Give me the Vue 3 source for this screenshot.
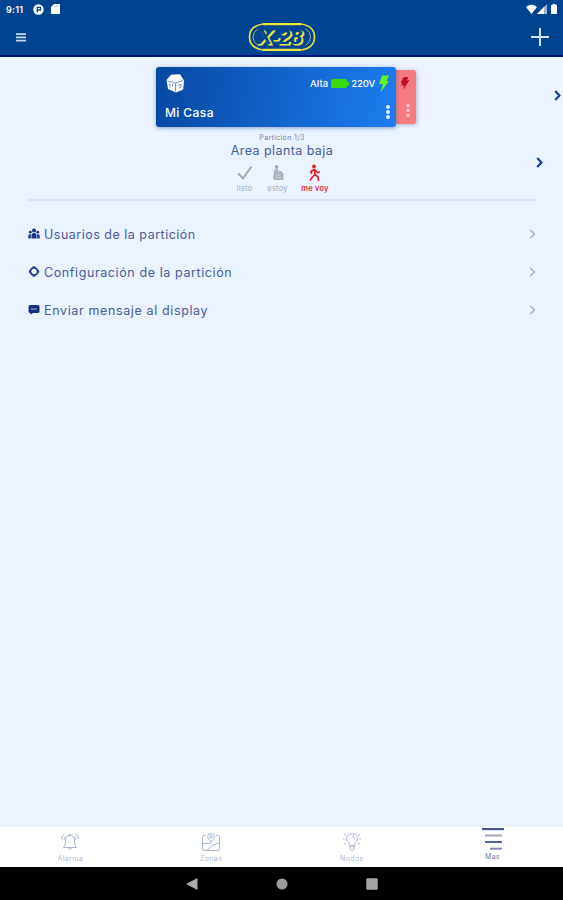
<template>
  <div class="screen">
    <header class="header">
      <div class="status-bar">
        <span class="clock">9:11</span>
        <svg class="st-app" width="11" height="11" viewBox="0 0 11 11">
          <circle cx="5.5" cy="5.5" r="5.2" fill="#fff" />
          <path d="M4.300 8.500V3.400h3.800M5 6h2.500V4" fill="none" stroke="#004390" stroke-width="1.300" />
        </svg>
        <svg class="st-sd" width="9" height="10" viewBox="0 0 9 10">
          <path d="M3 0h5.2q.8 0 .8.8v8.4q0 .8-.8.8H.8Q0 10 0 9.200V3z" fill="#fff" />
          <path d="M3.500 1.500v1.500M5.300 1.500v1.500M7 1.500v1.500" stroke="#7d9fc9" stroke-width=".7" />
        </svg>
        <svg class="st-right" width="34" height="11" viewBox="0 0 34 11">
          <path d="M0 3Q5.500-2 11 3L5.500 10z" fill="#fff" />
          <path d="M21 0v10H11z" fill="#9db6d8" />
          <path d="M18 3v7h-7z" fill="#fff" />
          <path d="M25 1h1.500V0h3v1H31v9h-6z" fill="#fff" />
        </svg>
      </div>
      <div class="toolbar">
        <svg width="10" height="9" viewBox="0 0 10 9"><path d="M0 1.200h10M0 4.400h10M0 7.600h10" stroke="#c9d7ea" stroke-width="1.800" /></svg>
        <svg class="logo" width="68" height="30" viewBox="0 0 68 30">
          <path d="M15 2.200H53M15 27.800H53" stroke="#ece63a" stroke-width="2.200" />
          <path d="M15 2Q1.500 4 1.500 15T15 28M53 2Q66.500 4 66.500 15T53 28" fill="none" stroke="#e0dc44" stroke-width="1.700" />
          <path d="M10 6.500Q5 10 5 15T10 23.500M57.500 6.500Q62.500 10 62.500 15T57.500 23.500" fill="none" stroke="#a9b266" stroke-width="1" />
          <text x="11.500" y="23" textLength="44" lengthAdjust="spacingAndGlyphs" class="logo-text lit">X-28</text>
          <text x="10" y="22.200" textLength="44" lengthAdjust="spacingAndGlyphs" class="logo-text">X-28</text>
        </svg>
        <svg width="18" height="18" viewBox="0 0 18 18"><path d="M9 0v18M0 9h18" stroke="#d5e0f0" stroke-width="2" /></svg>
      </div>
    </header>

    <main class="content">
      <section class="panels">
        <article class="card">
          <div class="card-row">
            <svg width="19" height="19" viewBox="0 0 19 19">
              <path d="M5 .8l9-.5 4 6.200-.8 9L10 18.500 2 15 .5 6z" fill="#fff" />
              <path d="M1.500 7l8 2 7.500-2.500M9.500 9v8.500M4 9.500v4M6.500 10v2.500M12 11.500l3-1v2.500l-2 .8" fill="none" stroke="#6a98cf" stroke-width="1" />
            </svg>
            <div class="power">
              <span class="alta">Alta</span>
              <svg width="18" height="9" viewBox="0 0 18 9"><path d="M1.500 0h13q1.500 0 1.500 2l2 1v3l-2 1q0 2-1.500 2h-13Q0 9 0 7.500v-6Q0 0 1.500 0z" fill="#39dc0a" /></svg>
              <span class="volt">220V</span>
              <svg class="bolt" width="12" height="18" viewBox="0 0 12 18"><path d="M4 .5h7L8.500 6H11L2.500 17.500 4.800 9H1z" fill="#61f42d" /></svg>
            </div>
          </div>
          <div class="card-row bottom">
            <span class="card-title">Mi Casa</span>
            <svg class="dots" width="4" height="14" viewBox="0 0 4 14" fill="#eff6ff"><circle cx="2" cy="2" r="1.900" /><circle cx="2" cy="7" r="1.900" /><circle cx="2" cy="12" r="1.900" /></svg>
          </div>
        </article>
        <article class="next-card">
          <svg width="10" height="15" viewBox="0 0 10 15"><path d="M3.500 1h5L6.800 4.500l2.700-.5-6.500 10L4 9.500H1L2.200 7H.7z" fill="#bd1020" /></svg>
          <svg width="4" height="13" viewBox="0 0 4 13" fill="#ffc7cb"><circle cx="2" cy="1.700" r="1.700" /><circle cx="2" cy="6.500" r="1.700" /><circle cx="2" cy="11.300" r="1.700" /></svg>
        </article>
        <svg class="next-panel" width="7" height="11" viewBox="0 0 7 11"><path d="M1.200 1l4.300 4.500L1.200 10" class="chev-bold" /></svg>
      </section>

      <section class="partition">
        <div class="part-num">Partición 1/3</div>
        <div class="part-name">Area planta baja</div>
        <div class="modes">
          <div class="mode">
            <svg width="16" height="18" viewBox="0 0 16 18"><path d="M1.200 9.500L6 14.500 14.500 2.500" fill="none" stroke="#a5a8ae" stroke-width="2" /></svg>
            <span>listo</span>
          </div>
          <div class="mode">
            <svg width="16" height="18" viewBox="0 0 16 18">
              <circle cx="6.500" cy="3" r="1.900" fill="#a5a8ae" />
              <path d="M4.500 5.500h4V9H9V7h3v2h1.500v7H5q-2 0-2-2z" fill="#aeb1b7" />
              <path d="M5.500 11h5M5.500 13.500h6M3.500 6v6" stroke="#dfe4ed" stroke-width=".6" />
            </svg>
            <span>estoy</span>
          </div>
          <div class="mode active">
            <svg width="16" height="18" viewBox="0 0 16 18">
              <circle cx="7" cy="2.500" r="1.900" fill="#e3232b" />
              <path d="M7.500 5L8 10.500M7 5.500L4 7.500l.5 2.500M8 6l2.500 2.500L13 8M8 10.500L5.500 13l-2.500 3.500M8 10.500l3 2.500.5 4" fill="none" stroke="#e3232b" stroke-width="1.700" />
            </svg>
            <span>me voy</span>
          </div>
        </div>
        <svg class="next-part" width="7" height="11" viewBox="0 0 7 11"><path d="M1.200 1l4.300 4.500L1.200 10" class="chev-bold" /></svg>
      </section>

      <ul class="menu">
        <li v-for="item in items" :key="item.label">
          <svg width="12" height="12" viewBox="0 0 12 12">
            <g v-if="item.icon === 'users'" fill="#15347f">
              <circle cx="6" cy="2.600" r="2" /><circle cx="2.300" cy="4.200" r="1.400" /><circle cx="9.700" cy="4.200" r="1.400" />
              <path d="M3.500 10.500V7q0-2 2.500-2t2.500 2v3.500zM.3 10.500V8q0-2 2.500-2v4.500zM11.700 10.500V8q0-2-2.500-2v4.500z" />
            </g>
            <g v-else-if="item.icon === 'config'" fill="none" stroke="#24408a">
              <circle cx="6" cy="5.500" r="3.600" stroke-width="1.900" />
              <path d="M6 .3v1.500M6 9.200v1.500M.8 5.500h1.500M9.700 5.500h1.500" stroke-width="2.600" />
            </g>
            <g v-else>
              <path d="M2 1h8q1.500 0 1.500 1.500v5Q11.500 9 10 9H5L2.500 10.800V9Q.5 9 .5 7.500v-5Q.5 1 2 1z" fill="#15347f" />
              <path d="M3 5h6" stroke="#8c9fc8" stroke-width="1.200" />
            </g>
          </svg>
          <span :style="{ letterSpacing: item.spacing + 'px' }">{{ item.label }}</span>
          <svg class="arrow" width="7" height="10" viewBox="0 0 7 10"><path d="M1 .8L5.500 5 1 9.200" fill="none" stroke="#a3abbd" stroke-width="1.300" /></svg>
        </li>
      </ul>
    </main>

    <nav class="tabs">
      <div class="tab">
        <svg width="20" height="20" viewBox="0 0 20 20" class="line-icon">
          <path d="M3.500 15.500q2-2 2-6.500 0-5.500 4.500-5.500t4.500 5.500q0 4.500 2 6.500zM8 16q2 3 4 0M8.500 3.500q1.500-2.500 3 0M4.500 2Q1.500 3.500 1.500 7M15.500 2q3 1.500 3 5M5.500 4.500Q4 5.500 4 8M14.500 4.500Q16 5.500 16 8" />
        </svg>
        <span>Alarma</span>
      </div>
      <div class="tab">
        <svg width="20" height="20" viewBox="0 0 20 20" class="line-icon">
          <path d="M5 3.500H3Q1.500 3.500 1.500 6v11q0 1.500 1.500 1.500h14q1.500 0 1.500-1.500V6q0-2.500-1.500-2.500h-2M1.500 11.500h7l2-1M6 18.500l5-5 7.500-3M10 10Q6.500 7 6.500 4.500T10 1.500t3.500 3T10 10z" /><circle cx="10" cy="4.700" r="1.300" />
        </svg>
        <span>Zonas</span>
      </div>
      <div class="tab">
        <svg width="20" height="20" viewBox="0 0 20 20" class="line-icon">
          <path d="M8 14q0-2-1.500-3.500Q4.500 9 4.500 7q0-5 5.500-5t5.500 5q0 2-2 3.500Q12 12 12 14zM8 14v3l2 1.500 2-1.500v-3zM10 4.500q2.500 0 2.500 2.500M.8 7h2M17.200 7h2M2 2l2 1.500M18 2l-2 1.500M2 12.500L4 11M18 12.500L16 11" />
        </svg>
        <span>Nodos</span>
      </div>
      <div class="tab on">
        <svg width="22" height="22" viewBox="0 0 22 22">
          <path d="M0 1h22" stroke="#465594" stroke-width="2.400" />
          <path d="M3 7.500h17" stroke="#a9acbf" stroke-width="2.200" />
          <path d="M3 14h17" stroke="#53609c" stroke-width="2" />
          <path d="M8 20.700h12" stroke="#818aaf" stroke-width="2" />
        </svg>
        <span>Mas</span>
      </div>
    </nav>

    <footer class="android-nav">
      <svg width="12" height="12" viewBox="0 0 12 12"><path d="M0 6L11.500 0v12z" fill="#aaa" /></svg>
      <svg width="12" height="12" viewBox="0 0 12 12"><circle cx="6" cy="6" r="5.500" fill="#9c9c9c" /></svg>
      <svg width="12" height="12" viewBox="0 0 12 12"><rect x=".3" y=".3" width="11.400" height="11.400" rx="1" fill="#a5a5a5" /></svg>
    </footer>
  </div>
</template>

<script setup>
const items = [
  { icon: 'users', label: 'Usuarios de la partición', spacing: 0.5 },
  { icon: 'config', label: 'Configuración de la partición', spacing: 0.6 },
  { icon: 'message', label: 'Enviar mensaje al display', spacing: 0.63 }
]
</script>

<style>
body { margin: 0; }
</style>

<style scoped>
.screen { width: 563px; height: 900px; display: flex; flex-direction: column; background: #eaf3ff; color: #4c5b9b; font-family: Inter, "Open Sans", sans-serif; overflow: hidden; }
.screen svg { display: block; flex: none; }

.header { height: 57px; box-sizing: border-box; background: #004390; border-bottom: 2px solid #01127f; flex: none; }
.status-bar { height: 18px; display: flex; align-items: center; padding: 0 6px; color: #fff; }
.clock { width: 27px; font-size: 9px; font-weight: 600; letter-spacing: 0.3px; }
.st-sd { margin-left: 7px; }
.st-right { margin-left: auto; margin-right: -3px; }
.toolbar { height: 38px; display: flex; align-items: center; justify-content: space-between; padding: 0 14px 0 16px; }
.logo { margin-left: 6px; }
.logo-text { font: italic bold 21px "Liberation Sans", sans-serif; fill: #004390; }
.logo-text.lit { fill: #e8e23e; stroke: #e8e23e; stroke-width: 1.2; }

.content { flex: 1; }
.panels { display: flex; align-items: flex-start; padding: 10px 0 0 156px; height: 61px; }
.card { width: 240px; height: 60px; box-sizing: border-box; padding: 7px 6px 0 10px; border-radius: 3px; background: linear-gradient(100deg, #0648a0, #1d7df0); color: #fff; box-shadow: 0 1px 4px rgba(40, 80, 140, 0.5); z-index: 1; }
.card-row { display: flex; align-items: center; justify-content: space-between; height: 19px; }
.power { display: flex; align-items: center; font-size: 9.500px; font-weight: 500; }
.alta { margin-right: 3px; letter-spacing: 0.1px; }
.volt { margin-left: 2px; letter-spacing: -0.2px; }
.bolt { margin-left: 3px; }
.bottom { margin-top: 9px; }
.card-title { margin-left: -1px; font-size: 12px; font-weight: 500; letter-spacing: 0.4px; padding-top: 1px; }
.next-card { width: 20px; height: 54px; box-sizing: border-box; margin-top: 3px; padding: 6px 2px 0 0; display: flex; flex-direction: column; align-items: center; gap: 13px; background: #f77b7e; border-radius: 0 3px 3px 0; box-shadow: 1px 1px 4px rgba(60, 60, 100, 0.35); }
.next-card svg:last-child { margin-left: 5px; }
.next-panel { margin: 23px 2px 0 auto; }
.chev-bold { fill: none; stroke: #15438f; stroke-width: 2.200; }

.partition { position: relative; margin: 0 27px 0 28px; height: 71px; border-bottom: 2px solid #d9e2ef; display: flex; flex-direction: column; align-items: center; }
.part-num { margin-top: 4px; height: 11px; line-height: 11px; font-size: 7px; color: #717daa; letter-spacing: 0.35px; }
.part-name { height: 15px; line-height: 15px; font-size: 12.500px; letter-spacing: 0.42px; }
.modes { display: flex; margin-top: 6px; }
.mode { width: 33px; display: flex; flex-direction: column; align-items: center; color: #a5a9b2; font-size: 7.500px; line-height: 9px; }
.mode + .mode + .mode { width: 42px; }
.mode span { margin-top: 2px; white-space: nowrap; letter-spacing: 0.2px; }
.mode.active { color: #e3303a; font-weight: 600; }
.next-part { position: absolute; right: -7px; top: 29px; }

.menu { list-style: none; margin: 14px 27px 0 28px; padding: 0; }
.menu li { height: 38px; display: flex; align-items: center; font-size: 12.500px; }
.menu li span { margin-left: 4px; }
.arrow { margin-left: auto; }

.tabs { height: 40px; flex: none; display: grid; grid-template-columns: repeat(4, 1fr); background: #fff; }
.tab { display: flex; flex-direction: column; align-items: center; padding-top: 5px; font-size: 7px; line-height: 9px; color: #b0b9d3; }
.tab span { margin-top: 2px; letter-spacing: 0.4px; }
.tab.on { padding-top: 1px; color: #747da7; }
.line-icon { fill: none; stroke: #a8b5d0; stroke-width: 1; }
.android-nav { height: 33px; flex: none; display: flex; align-items: center; justify-content: center; gap: 78px; background: #000; }
</style>
